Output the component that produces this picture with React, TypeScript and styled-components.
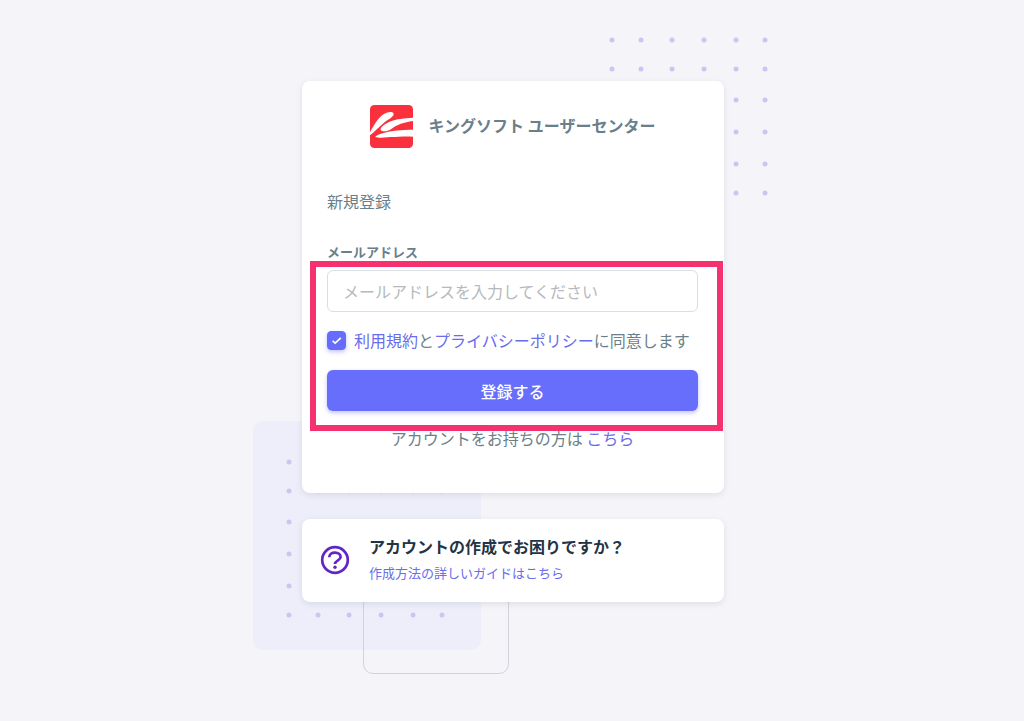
import React, { useState } from 'react';
import styled, { createGlobalStyle } from 'styled-components';

const GlobalStyle = createGlobalStyle`
  *, *::before, *::after { box-sizing: border-box; }
  body {
    margin: 0;
    background: #f5f5f9;
    color: #6b7f8a;
    font-family: "Noto Sans CJK JP", "Noto Sans", sans-serif;
    font-size: 16px;
    line-height: 24px;
  }
`;

const Page = styled.main`
  display: flex;
  justify-content: center;
  min-height: 100vh;
  padding: 81px 16px 48px 18px;
  overflow: hidden;
`;

const Column = styled.div`
  position: relative;
  display: flex;
  flex-direction: column;
  gap: 26px;
  width: 100%;
  max-width: 422px;
`;

const Card = styled.section`
  position: relative;
  background: #fff;
  border-radius: 8px;
  box-shadow: 0 2px 6px rgba(67, 89, 113, 0.14);
`;

const SignUpCard = styled(Card)`
  padding: 24px 26px 43px 25px;
`;

const Brand = styled.header`
  display: flex;
  align-items: center;
  justify-content: center;
  gap: 16px;
  margin-bottom: 41px;
`;

const BrandName = styled.h1`
  margin: 0;
  padding-bottom: 4px;
  font-size: 16px;
  font-weight: 700;
`;

const Heading = styled.h2`
  margin: 0 0 30px;
  font-size: 16px;
  font-weight: 400;
`;

const Form = styled.form`
  display: flex;
  flex-direction: column;
`;

const Label = styled.label`
  margin-bottom: 9px;
  font-size: 13px;
  font-weight: 700;
  line-height: 18px;
`;

const TextInput = styled.input`
  width: 100%;
  height: 42px;
  padding: 0 15px;
  border: 1px solid #dadde3;
  border-radius: 6px;
  background: #fff;
  color: #6b7f8a;
  font: inherit;

  &::placeholder { color: #b6b9bd; opacity: 1; }
`;

const Consent = styled.div`
  display: flex;
  align-items: center;
  gap: 8px;
  margin: 16px 0 18px;
`;

const CheckWrap = styled.span`
  display: grid;
  flex: none;
  width: 19px;
  height: 19px;

  & > * { grid-area: 1 / 1; }
  svg { pointer-events: none; }
`;

const Checkbox = styled.input`
  appearance: none;
  width: 19px;
  height: 19px;
  margin: 0;
  border: 1px solid #c5c9d2;
  border-radius: 4px;
  background: #fff;

  &:checked {
    border-color: #666cfb;
    background: #666cfb;
    box-shadow: 0 2px 4px rgba(105, 108, 255, 0.4);
  }
`;

const Link = styled.a`
  color: #696cec;
  text-decoration: none;
`;

const SubmitButton = styled.button`
  height: 41px;
  border: 0;
  border-radius: 6px;
  background: #666efb;
  box-shadow: 0 2px 4px rgba(105, 108, 255, 0.4);
  color: #fff;
  font: inherit;
  font-weight: 500;
`;

const SignIn = styled.p`
  margin: 15px 0 0;
  text-align: center;
`;

const Highlight = styled.div`
  position: absolute;
  top: 180px;
  right: 1px;
  left: 8px;
  height: 170px;
  border: 6px solid #f5316f;
  pointer-events: none;
`;

const HelpCard = styled(Card)`
  display: flex;
  align-items: center;
  gap: 19px;
  padding: 15px 18px 17px;
`;

const HelpText = styled.div`
  display: flex;
  flex-direction: column;
  gap: 3px;
`;

const HelpTitle = styled.h2`
  margin: 0;
  color: #233446;
  font-size: 16px;
  font-weight: 700;
`;

const HelpLink = styled(Link)`
  font-size: 13px;
`;

const TopDots = styled.svg`
  position: absolute;
  top: -45px;
  right: -47px;
`;

const Shade = styled.div`
  position: absolute;
  top: 340px;
  left: -49px;
  width: 228px;
  height: 229px;
  border-radius: 10px;
  background: #eeeefa;
`;

const Outline = styled.div`
  position: absolute;
  top: 446px;
  left: 61px;
  width: 146px;
  height: 147px;
  border: 1px solid #d0d3da;
  border-radius: 10px;
`;

const BottomDots = styled.svg`
  position: absolute;
  top: 377px;
  left: -17px;
`;

const stops = [4, 33, 64, 96, 128, 157];

const Dots = () => (
  <>
    {stops.map((y) => stops.map((x) => (
      <circle key={`${x}-${y}`} cx={x} cy={y} r="2.5" fill="#cbc5ef" />
    )))}
  </>
);

const Logo = () => (
  <svg width="43" height="43" viewBox="0 0 129 129" aria-hidden="true">
    <rect width="129" height="129" rx="13" fill="#fb303d" />
    <path d="M0 82C13 58 26 36 42 27C53 20 69 18 71 26C72 36 54 42 42 53C27 66 14 80 0 91Z" fill="#fff" />
    <path d="M129 38C105 40 79 41 59 50C43 57 29 68 32 75C37 82 54 79 64 72C80 59 102 52 129 48Z" fill="#fff" />
    <path d="M129 74C96 74 63 77 41 84C27 88 14 93 17 97C23 101 89 92 129 95Z" fill="#fff" />
  </svg>
);

const HelpIcon = () => (
  <svg width="30" height="30" viewBox="0 0 30 30" fill="none" aria-hidden="true">
    <circle cx="15" cy="15" r="12.8" stroke="#6027c4" strokeWidth="2.7" />
    <path d="M9.3 12.2C9.3 9.2 11.7 7.6 14.9 7.6C18.3 7.6 20.6 9.4 20.6 12C20.6 15.4 15.2 15.2 15 19" stroke="#6027c4" strokeWidth="2.7" />
    <circle cx="15" cy="22.2" r="1.7" fill="#6027c4" />
  </svg>
);

export default function App() {
  const [agreed, setAgreed] = useState(true);

  return (
    <>
      <GlobalStyle />
      <Page>
        <Column>
          <TopDots width="163" height="163" aria-hidden="true"><Dots /></TopDots>
          <Shade />
          <BottomDots width="163" height="163" aria-hidden="true"><Dots /></BottomDots>
          <Outline />
          <SignUpCard>
            <Brand>
              <Logo />
              <BrandName>キングソフト ユーザーセンター</BrandName>
            </Brand>
            <Heading>新規登録</Heading>
            <Form onSubmit={(e) => e.preventDefault()}>
              <Label htmlFor="email">メールアドレス</Label>
              <TextInput id="email" type="email" placeholder="メールアドレスを入力してください" />
              <Consent>
                <CheckWrap>
                  <Checkbox
                    id="agree"
                    type="checkbox"
                    checked={agreed}
                    onChange={(e) => setAgreed(e.target.checked)}
                  />
                  <svg width="19" height="19" viewBox="0 0 19 19" fill="none" aria-hidden="true">
                    <path d="M5.6 9.8L8.2 12.2L13.8 6.8" stroke="#fff" strokeWidth="1.7" />
                  </svg>
                </CheckWrap>
                <label htmlFor="agree">
                  <Link href="#terms">利用規約</Link>と<Link href="#privacy">プライバシーポリシー</Link>に同意します
                </label>
              </Consent>
              <SubmitButton type="submit">登録する</SubmitButton>
            </Form>
            <SignIn>アカウントをお持ちの方は <Link href="#login">こちら</Link></SignIn>
            <Highlight />
          </SignUpCard>
          <HelpCard>
            <HelpIcon />
            <HelpText>
              <HelpTitle>アカウントの作成でお困りですか？</HelpTitle>
              <HelpLink href="#guide">作成方法の詳しいガイドはこちら</HelpLink>
            </HelpText>
          </HelpCard>
        </Column>
      </Page>
    </>
  );
}
